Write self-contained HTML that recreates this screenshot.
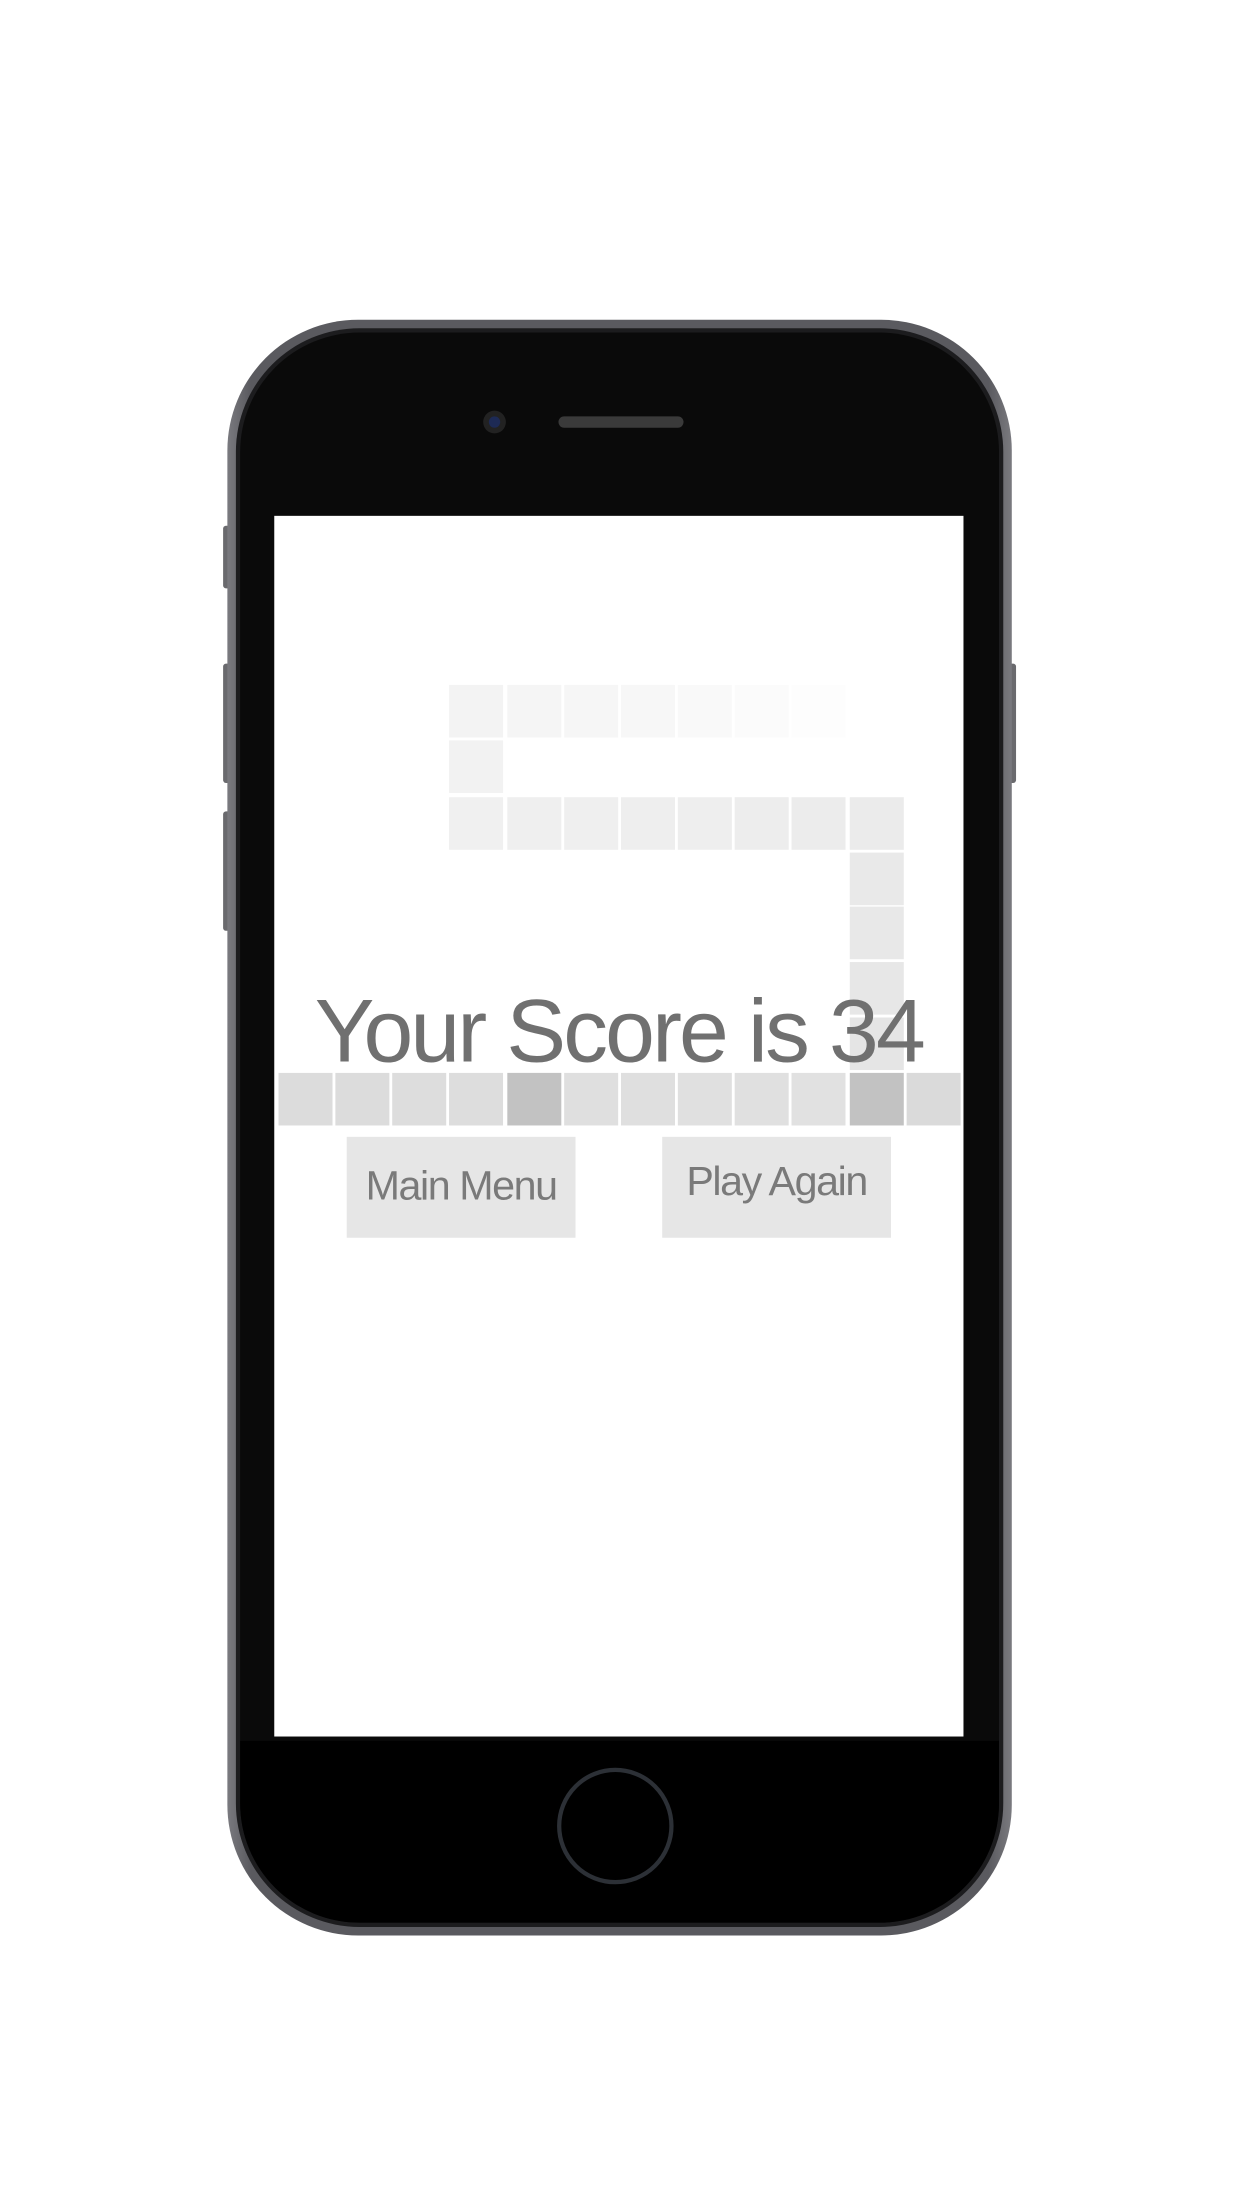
<!DOCTYPE html>
<html><head><meta charset="utf-8"><style>
html,body{margin:0;padding:0;background:#fff;width:1242px;height:2208px;overflow:hidden}
#w{position:absolute;left:0;top:0;width:874px;height:1554px;transform:scale(1.42105);transform-origin:0 0}
.a{position:absolute}
.t{position:absolute;width:38px;height:37px;background:#e0e0e0}
.btn{position:absolute;background:#e6e6e6;color:#7a7a7a;font-family:"Liberation Sans",sans-serif;font-size:29px;text-align:center;line-height:70px;letter-spacing:-1px}
</style></head><body><div id="w">
<div class="a" style="left:157px;top:370px;width:5px;height:44px;background:#6a6a6e;border-radius:2px"></div>
<div class="a" style="left:157px;top:467px;width:5px;height:84px;background:#6a6a6e;border-radius:2px"></div>
<div class="a" style="left:157px;top:571px;width:5px;height:84px;background:#6a6a6e;border-radius:2px"></div>
<div class="a" style="left:710px;top:467px;width:5px;height:84px;background:#6a6a6e;border-radius:2px"></div>
<div class="a" style="left:160px;top:225px;width:552px;height:1137px;border-radius:92px;background:linear-gradient(90deg,#7a7a7f,#5a5a5f 3%,#5a5a5f 97%,#7a7a7f)"></div>
<div class="a" style="left:166px;top:231px;width:540px;height:1125px;border-radius:87px;background:#1c1c1e"></div>
<div class="a" style="left:169px;top:234px;width:534px;height:1119px;border-radius:84px;background:#0a0a0a"></div>
<div class="a" style="left:169px;top:1225px;width:534px;height:128px;border-radius:0 0 84px 84px;background:#000"></div>
<div class="a" style="left:340px;top:289px;width:16px;height:16px;border-radius:50%;background:#222;"></div>
<div class="a" style="left:344px;top:293px;width:8px;height:8px;border-radius:50%;background:#1d2a55"></div>
<div class="a" style="left:393px;top:293px;width:88px;height:8px;border-radius:4px;background:#3a3a3a"></div>
<div class="a" style="left:392px;top:1244px;width:82px;height:82px;border-radius:50%;border:3px solid #2c3036;box-sizing:border-box"></div>
<div class="a" style="left:193px;top:363px;width:485px;height:859px;background:#fff"></div>
<div class="a" style="left:0;top:0">
<div class="t" style="left:316px;top:482px;background:#f3f3f3"></div>
<div class="t" style="left:357px;top:482px;background:#f5f5f5"></div>
<div class="t" style="left:397px;top:482px;background:#f6f6f6"></div>
<div class="t" style="left:437px;top:482px;background:#f7f7f7"></div>
<div class="t" style="left:477px;top:482px;background:#f9f9f9"></div>
<div class="t" style="left:517px;top:482px;background:#fbfbfb"></div>
<div class="t" style="left:557px;top:482px;background:#fdfdfd"></div>
<div class="t" style="left:316px;top:521px;background:#f2f2f2"></div>
<div class="t" style="left:316px;top:561px;background:#f0f0f0"></div>
<div class="t" style="left:357px;top:561px;background:#efefef"></div>
<div class="t" style="left:397px;top:561px;background:#efefef"></div>
<div class="t" style="left:437px;top:561px;background:#eeeeee"></div>
<div class="t" style="left:477px;top:561px;background:#eeeeee"></div>
<div class="t" style="left:517px;top:561px;background:#ededed"></div>
<div class="t" style="left:557px;top:561px;background:#ececec"></div>
<div class="t" style="left:598px;top:561px;background:#ebebeb"></div>
<div class="t" style="left:598px;top:600px;background:#e9e9e9"></div>
<div class="t" style="left:598px;top:638px;background:#e8e8e8"></div>
<div class="t" style="left:598px;top:677px;background:#e7e7e7"></div>
<div class="t" style="left:598px;top:716px;background:#e5e5e5"></div>
<div class="t" style="left:196px;top:755px;background:#dcdcdc"></div>
<div class="t" style="left:236px;top:755px;background:#dcdcdc"></div>
<div class="t" style="left:276px;top:755px;background:#dddddd"></div>
<div class="t" style="left:316px;top:755px;background:#dddddd"></div>
<div class="t" style="left:357px;top:755px;background:#c2c2c2"></div>
<div class="t" style="left:397px;top:755px;background:#dfdfdf"></div>
<div class="t" style="left:437px;top:755px;background:#dfdfdf"></div>
<div class="t" style="left:477px;top:755px;background:#e0e0e0"></div>
<div class="t" style="left:517px;top:755px;background:#e0e0e0"></div>
<div class="t" style="left:557px;top:755px;background:#e1e1e1"></div>
<div class="t" style="left:598px;top:755px;background:#c2c2c2"></div>
<div class="t" style="left:638px;top:755px;background:#dadada"></div>
<div class="a" style="left:193px;top:688px;width:485px;text-align:center;font-family:'Liberation Sans',sans-serif;font-size:63px;color:#707070;letter-spacing:-2px;line-height:76px;white-space:nowrap">Your Score is 34</div>
<div class="btn" style="left:244px;top:800px;width:161px;height:71px">Main Menu</div>
<div class="btn" style="left:466px;top:800px;width:161px;height:71px;line-height:64px">Play Again</div>
</div>
</div></body></html>
